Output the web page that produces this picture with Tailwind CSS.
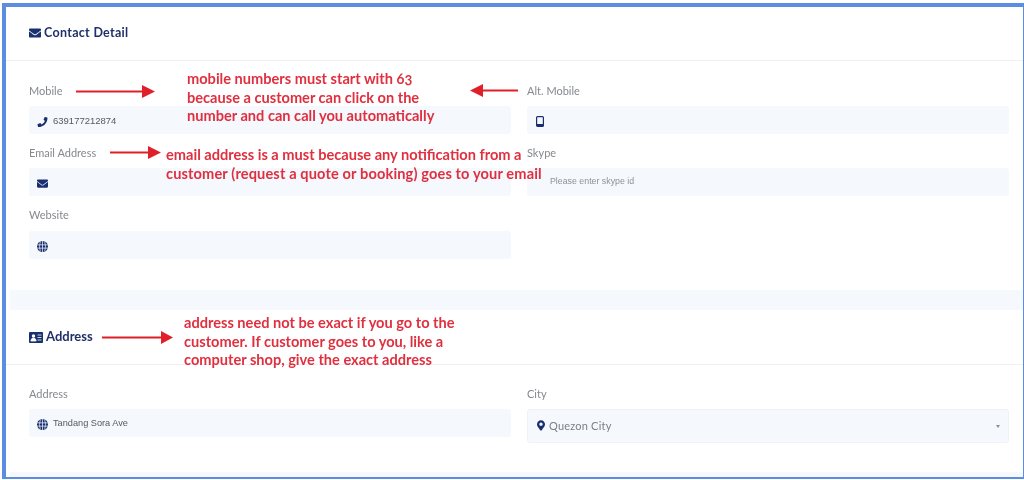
<!DOCTYPE html>
<html lang="en">
<head>
    <meta charset="UTF-8">
    <title>Contact Detail</title>
    <script src="https://cdn.jsdelivr.net/npm/@tailwindcss/browser@4"></script>
</head>
<body class="bg-white">
<div class="relative h-[480px] w-[1024px] overflow-hidden bg-white pt-[3px] pl-[2px] pb-[1px] font-['Lato',sans-serif] blur-[0.5px]">
    <div class="flex h-[476px] w-[1022px] flex-col border-t-4 border-r-[1px] border-b-[2px] border-l-4 border-[#5b8ee0] bg-white">

        <!-- contact detail card -->
        <section class="h-[283px]">
            <h2 class="flex h-[54px] items-center gap-[3px] border-b border-[#eef0f3] pl-[23px] text-[12.5px] font-bold tracking-[0.3px] text-[#1f3068]">
                <svg class="h-[12px] w-[12px] -translate-y-[1px] fill-[#1a2f70]" viewBox="0 0 512 512"><path d="M502.3 190.8c3.9-3.1 9.7-.2 9.7 4.7V400c0 26.5-21.5 48-48 48H48c-26.5 0-48-21.5-48-48V195.6c0-5 5.7-7.8 9.7-4.7 22.4 17.4 52.1 39.5 154.1 113.6 21.1 15.4 56.7 47.8 92.2 47.6 35.7.3 72-32.8 92.3-47.6 102-74.1 131.6-96.3 154-113.7zM256 320c23.2.4 56.6-29.2 73.4-41.4 132.7-96.3 142.8-104.7 173.4-128.7 5.8-4.5 9.2-11.5 9.2-18.9v-19c0-26.5-21.5-48-48-48H48C21.5 64 0 85.5 0 112v19c0 7.4 3.4 14.3 9.2 18.9 30.6 23.9 40.7 32.4 173.4 128.7 16.8 12.2 50.2 41.8 73.4 41.4z"/></svg>
                Contact Detail
            </h2>
            <div class="grid grid-cols-[482px_482px] gap-x-[16px] pt-[22px] pl-[23px] text-[11px] text-[#85888d]">
                <div>
                    <label class="block h-[16px] leading-[16px]">Mobile</label>
                    <div class="mt-[7px] flex h-[28px] items-center rounded-[3px] bg-[#f5f8fc] pt-[3px] pl-[8px]">
                        <svg class="h-[10px] w-[11px] fill-[#1a2f70]" viewBox="0 0 512 512"><path d="M493.4 24.6l-104-24c-11.3-2.6-22.9 3.3-27.5 13.9l-48 112c-4.2 9.8-1.4 21.3 6.9 28l60.6 49.600c-36 76.700-98.900 140.500-177.200 177.200l-49.600-60.600c-6.800-8.300-18.200-11.100-28-6.900l-112 48C3.900 366.500-2 378.100.6 389.400l24 104C27.100 504.200 36.700 512 48 512c256.100 0 464-207.500 464-464 0-11.200-7.700-20.900-18.600-23.400z"/></svg>
                        <span class="ml-[5px] font-['Liberation_Sans',sans-serif] text-[9.5px] text-[#555a60]">639177212874</span>
                    </div>
                </div>
                <div>
                    <label class="block h-[16px] leading-[16px]">Alt. Mobile</label>
                    <div class="mt-[7px] flex h-[28px] items-center rounded-[3px] bg-[#f5f8fc] pt-[3px] pl-[9px]">
                        <svg class="h-[11px] w-[8px]" viewBox="0 0 8 11"><rect x="0.6" y="0.6" width="6.8" height="9.8" rx="1" fill="none" stroke="#1a2f70" stroke-width="1.2"/><rect x="1" y="8" width="6" height="2.4" fill="#1a2f70"/></svg>
                    </div>
                </div>
                <div class="mt-[11px]">
                    <label class="block h-[16px] leading-[16px]">Email Address</label>
                    <div class="mt-[7px] flex h-[28px] items-center rounded-[3px] bg-[#f5f8fc] pt-[3px] pl-[8px]">
                        <svg class="h-[11px] w-[11px] fill-[#1a2f70]" viewBox="0 0 512 512"><path d="M502.3 190.8c3.9-3.1 9.7-.2 9.7 4.7V400c0 26.5-21.5 48-48 48H48c-26.5 0-48-21.5-48-48V195.6c0-5 5.7-7.8 9.7-4.7 22.4 17.4 52.1 39.5 154.1 113.6 21.1 15.4 56.7 47.8 92.2 47.6 35.7.3 72-32.8 92.3-47.6 102-74.1 131.6-96.3 154-113.7zM256 320c23.2.4 56.6-29.2 73.4-41.4 132.7-96.3 142.8-104.7 173.4-128.7 5.8-4.5 9.2-11.5 9.2-18.9v-19c0-26.5-21.5-48-48-48H48C21.5 64 0 85.5 0 112v19c0 7.4 3.4 14.3 9.2 18.9 30.6 23.9 40.7 32.4 173.4 128.7 16.8 12.2 50.2 41.8 73.4 41.4z"/></svg>
                    </div>
                </div>
                <div class="mt-[11px]">
                    <label class="block h-[16px] leading-[16px]">Skype</label>
                    <div class="mt-[7px] flex h-[28px] items-center rounded-[3px] bg-[#f5f8fc] pl-[23px]">
                        <span class="font-['Liberation_Sans',sans-serif] text-[8.800px] text-[#8d9299]">Please enter skype id</span>
                    </div>
                </div>
                <div class="mt-[11px]">
                    <label class="block h-[16px] leading-[16px]">Website</label>
                    <div class="mt-[8px] flex h-[28px] items-center rounded-[3px] bg-[#f5f8fc] pt-[3px] pl-[8px]">
                        <svg class="h-[11px] w-[11px]" viewBox="0 0 20 20"><circle cx="10" cy="10" r="10" fill="#1a2f70"/><path d="M0 7h20M0 13h20M10 0v20M6 1q-3 9 0 18M14 1q3 9 0 18" fill="none" stroke="#f5f8fc" stroke-width="1.3"/></svg>
                    </div>
                </div>
            </div>
        </section>

        <div class="ml-[4px] h-[20px] shrink-0 bg-[#f5f8fc]"></div>

        <!-- address card -->
        <section class="h-[162px]">
            <h2 class="flex h-[55px] items-center gap-[3px] border-b border-[#eef0f3] pl-[23px] text-[13px] font-bold text-[#1f3068]">
                <svg class="h-[11px] w-[14px]" viewBox="0 0 14 11"><rect width="14" height="11" rx="1" fill="#1a2f70"/><circle cx="4.500" cy="4" r="1.700" fill="#fff"/><path d="M1.800 9q.4-3 2.700-3t2.700 3zM8.500 3h4M8.500 5.500h4M8.500 8h4" fill="#fff" stroke="#fff" stroke-width=".8"/></svg>
                Address
            </h2>
            <div class="grid grid-cols-[482px_482px] items-start gap-x-[16px] pt-[21px] pl-[23px] text-[11px] text-[#85888d]">
                <div>
                    <label class="block h-[16px] leading-[16px]">Address</label>
                    <div class="mt-[7px] flex h-[28px] items-center rounded-[3px] bg-[#f5f8fc] pt-[3px] pl-[8px]">
                        <svg class="h-[11px] w-[11px]" viewBox="0 0 20 20"><circle cx="10" cy="10" r="10" fill="#1a2f70"/><path d="M0 7h20M0 13h20M10 0v20M6 1q-3 9 0 18M14 1q3 9 0 18" fill="none" stroke="#f5f8fc" stroke-width="1.3"/></svg>
                        <span class="ml-[5px] -translate-y-[1px] font-['Liberation_Sans',sans-serif] text-[9.2px] text-[#555a60]">Tandang Sora Ave</span>
                    </div>
                </div>
                <div>
                    <label class="block h-[16px] leading-[16px]">City</label>
                    <div class="mt-[7px] flex h-[34px] items-center rounded-[3px] border border-[#eef1f5] bg-[#f5f8fc] pr-[8px] pl-[9px]">
                        <svg class="h-[11px] w-[8px] -translate-y-[1px] fill-[#1a2f70]" viewBox="0 0 384 512"><path d="M172.268 501.670C26.970 291.031 0 268.413 0 192 0 85.961 85.961 0 192 0s192 85.961 192 192c0 76.413-26.970 99.031-172.268 309.670-9.535 13.774-29.930 13.773-39.464 0zM192 272c44.183 0 80-35.817 80-80s-35.817-80-80-80-80 35.817-80 80 35.817 80 80 80z"/></svg>
                        <span class="ml-[4px] text-[11px] tracking-[0.2px] text-[#7b7f86]">Quezon City</span>
                        <span class="ml-auto h-0 w-0 border-x-[2px] border-t-[3px] border-x-transparent border-t-[#8a8f96]"></span>
                    </div>
                </div>
            </div>
        </section>

        <div class="ml-[4px] min-h-0 flex-1 bg-[#f5f8fc]"></div>
    </div>

    <!-- red notes drawn over the form -->
    <div class="absolute top-[70px] left-[187px] text-[14.6px] leading-[18.5px] font-bold whitespace-nowrap text-[#e0303f] oldstyle-nums">
        <p>mobile numbers must start with 63</p>
        <p>because a customer can click on the</p>
        <p>number and can call you automatically</p>
    </div>
    <div class="absolute top-[146px] left-[166px] text-[14.6px] leading-[18.5px] font-bold whitespace-nowrap text-[#e0303f]">
        <p>email address is a must because any notification from a</p>
        <p class="tracking-[0.13px]">customer (request a quote or booking) goes to your email</p>
    </div>
    <div class="absolute top-[314px] left-[184px] text-[14.6px] leading-[18.5px] font-bold whitespace-nowrap text-[#e0303f]">
        <p>address need not be exact if you go to the</p>
        <p>customer. If customer goes to you, like a</p>
        <p>computer shop, give the exact address</p>
    </div>
    <svg class="absolute top-[85px] left-[76px] h-[14px] w-[79px]" viewBox="0 0 79 14"><path d="M0 5.500h66V0l13 6.500L66 13V7.500H0z" fill="#e02028"/></svg>
    <svg class="absolute top-[84px] left-[470px] h-[14px] w-[48px]" viewBox="0 0 48 14"><path d="M48 5.500H13V0L0 6.500 13 13V7.500h35z" fill="#e02028"/></svg>
    <svg class="absolute top-[146px] left-[110px] h-[14px] w-[51px]" viewBox="0 0 51 14"><path d="M0 5.500h38V0l13 6.500L38 13V7.500H0z" fill="#e02028"/></svg>
    <svg class="absolute top-[331px] left-[102px] h-[14px] w-[71px]" viewBox="0 0 71 14"><path d="M0 5.500h59V0l12 6.500L59 13V7.500H0z" fill="#e02028"/></svg>
</div>
</body>
</html>
